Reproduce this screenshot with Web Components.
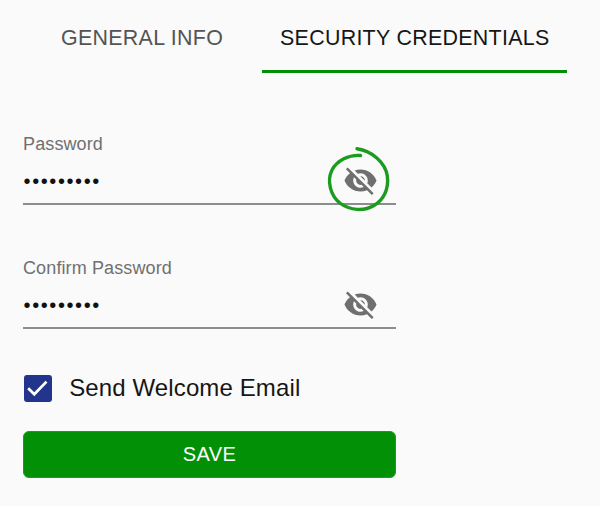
<!DOCTYPE html>
<html lang="en">
<head>
<meta charset="utf-8">
<title>Security Credentials</title>
<style>
html,body{margin:0;height:100%;background:#fafafa}
body{font-family:"Liberation Sans",Arial,sans-serif;overflow:hidden}
</style>
</head>
<body>
<credentials-page></credentials-page>
<script>
const define = (name, html) => customElements.define(name, class extends HTMLElement {
  constructor() {
    super();
    const t = document.createElement('template');
    t.innerHTML = html;
    this.attachShadow({mode: 'open'}).append(t.content.cloneNode(true));
  }
});

define('tab-item', `
<style>
:host{display:block;box-sizing:border-box;height:73px;padding:26px 18px 0;font-size:21.4px;line-height:24px;letter-spacing:.3px;white-space:nowrap;color:#545454;border-bottom:3px solid transparent}
:host([active]){color:#161616;border-bottom-color:#028f07}
</style><slot></slot>`);

define('tab-bar', `
<style>:host{display:grid;grid-template-columns:200px 305px;column-gap:19px;padding-left:43px}</style>
<slot></slot>`);

define('eye-off-icon', `
<style>:host{display:block;width:35px;height:35px}svg{display:block;width:100%;height:100%}</style>
<svg viewBox="0 0 24 24" fill="#6f6f6f"><path d="M12 7c2.76 0 5 2.24 5 5 0 .65-.13 1.26-.36 1.83l2.92 2.92c1.51-1.26 2.7-2.89 3.43-4.75-1.73-4.39-6-7.5-11-7.5-1.4 0-2.74.25-3.98.7l2.16 2.16C10.74 7.13 11.35 7 12 7zM2 4.27l2.28 2.28.46.46C3.08 8.3 1.78 10.02 1 12c1.73 4.39 6 7.5 11 7.5 1.55 0 3.03-.3 4.38-.84l.42.42L19.73 22 21 20.73 3.27 3 2 4.27zM7.53 9.8l1.55 1.55c-.05.21-.08.43-.08.65 0 1.66 1.34 3 3 3 .22 0 .44-.03.65-.08l1.55 1.55c-.67.33-1.41.53-2.2.53-2.76 0-5-2.24-5-5 0-.79.2-1.53.53-2.2zm4.31-.78l3.15 3.15.02-.16c0-1.66-1.34-3-3-3l-.17.01z"/></svg>`);

define('hand-circle', `
<style>:host{display:block;width:70px;height:70px;pointer-events:none}svg{display:block}</style>
<svg width="70" height="70" viewBox="325 145 70 70" fill="none" stroke="#1b9c1f" stroke-width="3.4" stroke-linecap="round" stroke-linejoin="round"><path d="M360.5 156.5C349 155.5 337 161.5 332 171C326.5 182 330.5 197 340.5 204.5C350 211.5 364 212.5 374 206.5C384 200.5 389 189.5 387.3 177C385.5 163.5 372 152 357 149.8"/></svg>`);

define('password-field', `
<style>
:host{display:flex;flex-direction:column;box-sizing:border-box;height:72px;width:373px;border-bottom:2px solid #8d8d8d}
.label{font-size:18px;line-height:22px;letter-spacing:.12px;color:#707070}
.row{display:flex;flex:none;justify-content:space-between;align-items:center;height:50px;padding:0 18.5px 0 .6px}
.value{font-size:20px;line-height:24px;letter-spacing:1.58px;color:#111;padding-top:1px}
.toggle{position:relative}
::slotted(*){position:absolute;left:-17.5px;top:-18.5px}
</style>
<div class="label"></div>
<div class="row"><span class="value">•••••••••</span><div class="toggle"><eye-off-icon></eye-off-icon><slot></slot></div></div>`);

define('check-option', `
<style>
:host{display:flex;align-items:center;height:28px;padding-left:1px;gap:17.7px;font-size:24px;letter-spacing:.12px;color:#161616;white-space:nowrap}
.box{box-sizing:border-box;width:27.5px;height:27px;border-radius:3px;background:#23348c}
svg{display:block}
</style>
<span class="box"><svg width="27" height="27" viewBox="0 0 27 27" fill="none" stroke="#fff" stroke-width="2.8"><path d="M4.2 13.3L10.3 19.2L22.5 6.6"/></svg></span><slot></slot>`);

define('save-button', `
<style>
:host{display:flex;align-items:center;justify-content:center;box-sizing:border-box;width:373px;height:47px;border-radius:6px;background:#029106;border:1px solid #18a01c;color:#fff;font-size:20px;letter-spacing:.4px;padding-bottom:1px}
</style><slot></slot>`);

define('credentials-page', `
<style>
:host{display:block;width:600px;height:506px;background:#fafafa}
form{display:flex;flex-direction:column;padding:60px 0 0 23px}
password-field+password-field{margin-top:52px}
check-option{margin-top:45px}
save-button{margin-top:29px}
</style>
<tab-bar><tab-item>GENERAL INFO</tab-item><tab-item active>SECURITY CREDENTIALS</tab-item></tab-bar>
<form>
<password-field label="Password"><hand-circle></hand-circle></password-field>
<password-field label="Confirm Password"></password-field>
<check-option>Send Welcome Email</check-option>
<save-button>SAVE</save-button>
</form>`);

const page = document.querySelector('credentials-page').shadowRoot;
for (const field of page.querySelectorAll('password-field'))
  field.shadowRoot.querySelector('.label').textContent = field.getAttribute('label');
</script>
</body>
</html>
